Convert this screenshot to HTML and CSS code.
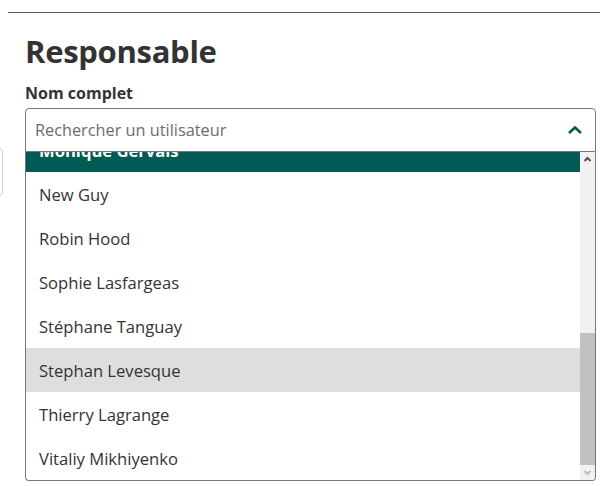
FILE: index.html
```html
<!DOCTYPE html>
<html lang="fr">
<head>
<meta charset="utf-8">
<link rel="stylesheet" href="styles.css">
</head>
<body>
<div class="page">
  <hr class="rule">
  <section class="panel">
    <h2 class="title">Responsable</h2>
    <div class="label">Nom complet</div>
    <div class="combo">
      <div class="ghost"></div>
      <div class="field">
        <span class="placeholder">Rechercher un utilisateur</span>
        <svg class="chev" width="16" height="10" viewBox="0 0 16 10"><path d="M2 8 L8 2.5 L14 8" fill="none" stroke="#005b55" stroke-width="2.6"/></svg>
      </div>
      <div class="menu">
        <ul class="options">
          <li class="opt selected">Monique Gervais</li>
          <li class="opt">New Guy</li>
          <li class="opt">Robin Hood</li>
          <li class="opt">Sophie Lasfargeas</li>
          <li class="opt">Stéphane Tanguay</li>
          <li class="opt hover">Stephan Levesque</li>
          <li class="opt">Thierry Lagrange</li>
          <li class="opt">Vitaliy Mikhiyenko</li>
        </ul>
        <div class="scrollbar">
          <div class="sb-btn"><svg width="15" height="15" viewBox="0 0 15 15"><path d="M4.5 9 L7.5 6 L10.5 9" fill="none" stroke="#505050" stroke-width="2"/></svg></div>
          <div class="sb-track"><div class="sb-thumb"></div></div>
          <div class="sb-btn"><svg width="15" height="15" viewBox="0 0 15 15"><path d="M4.5 6 L7.5 9 L10.5 6" fill="none" stroke="#bcbcbc" stroke-width="2"/></svg></div>
        </div>
      </div>
    </div>
  </section>
</div>
</body>
</html>
```
FILE: styles.css
```css
html, body {
  margin: 0;
  padding: 0;
  background: #fff;
}
body {
  font-family: "Open Sans", "Noto Sans", sans-serif;
  color: #333;
  overflow: hidden;
}
.page {
  width: 600px;
  height: 486px;
  overflow: hidden;
}
.rule {
  margin: 12px 0 0 8px;
  border: 0;
  border-top: 1px solid #5a5a5a;
  height: 0;
}
.panel {
  padding: 0 4px 0 25px;
}
.title {
  margin: 19px 0 0;
  font-size: 31px;
  line-height: 38px;
  font-weight: 700;
  color: #333;
  letter-spacing: -0.3px;
}
.label {
  margin-top: 12px;
  font-size: 16px;
  line-height: 22px;
  font-weight: 700;
  color: #333;
}
.combo {
  position: relative;
  margin-top: 4px;
  width: 571px;
}
.ghost {
  position: absolute;
  left: -64px;
  top: 40px;
  width: 40px;
  height: 46px;
  border: 1px solid #d4d4d4;
  border-radius: 4px;
}
.field {
  position: relative;
  display: flex;
  align-items: center;
  justify-content: space-between;
  height: 40px;
  border: 1px solid #777;
  border-radius: 4px 4px 0 0;
  padding: 2px 12px 0 9px;
  box-sizing: content-box;
  background: #fff;
}
.placeholder {
  font-size: 16.3px;
  line-height: 1.1;
  color: #6c6c6c;
}
.chev {
  display: block;
  margin-top: -2px;
}
.menu {
  display: flex;
  height: 328px;
  overflow: hidden;
  border: 1px solid #777;
  border-top: 0;
  border-radius: 0 0 4px 4px;
  background: #fff;
}
.options {
  flex: 1;
  list-style: none;
  margin: -24px 0 0;
  padding: 0;
}
.opt {
  height: 44px;
  box-sizing: border-box;
  display: flex;
  align-items: center;
  padding: 3px 0 0 13px;
  font-size: 16.6px;
  line-height: 1.1;
  color: #333;
}
.opt.selected {
  background: #005b55;
  color: #fff;
  font-weight: 700;
}
.opt.hover {
  background: #dedede;
}
.scrollbar {
  width: 15px;
  display: flex;
  flex-direction: column;
  background: #f1f1f1;
}
.sb-btn {
  height: 15px;
  flex: none;
}
.sb-btn svg {
  display: block;
}
.sb-track {
  flex: 1;
  display: flex;
  flex-direction: column;
  justify-content: flex-end;
}
.sb-thumb {
  height: 132px;
  background: #c1c1c1;
}
```
